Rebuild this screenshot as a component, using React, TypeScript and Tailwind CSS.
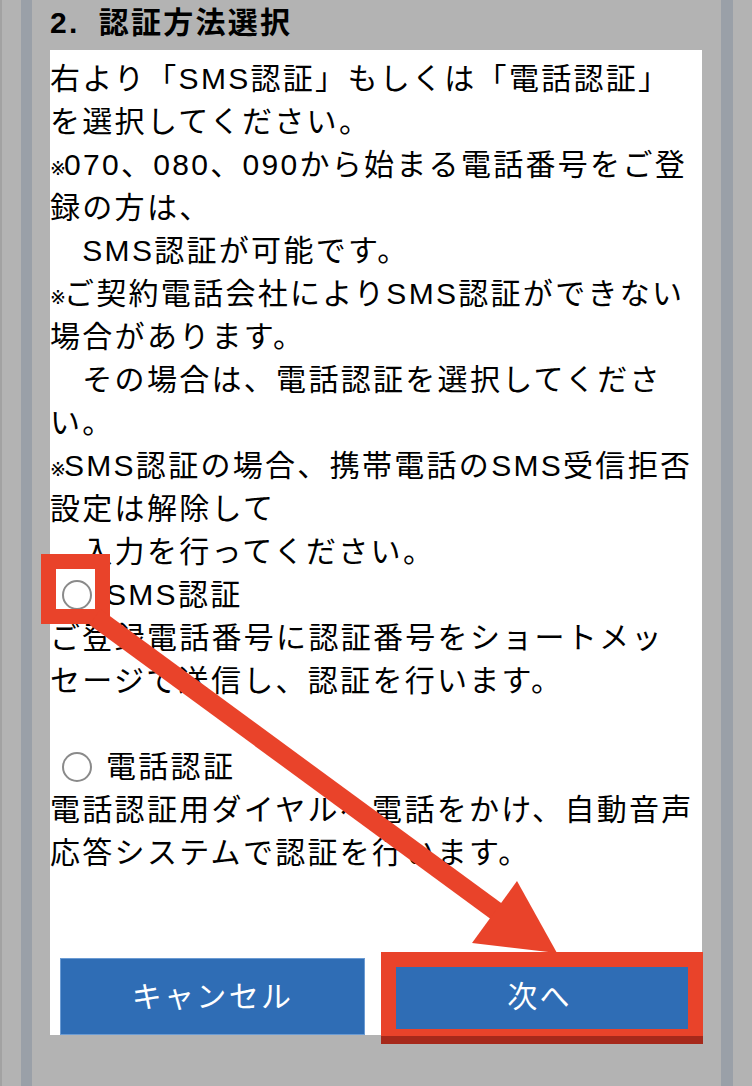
import React from "react";

const RED = "#e9432a";

// narrow reference mark, like the one the phone font draws
const Mark = () => (
  <span className="font-['DejaVu_Sans','Noto_Sans_CJK_JP',sans-serif] text-[19px] leading-none tracking-[-3px] pr-[1px]">
    ※
  </span>
);

const Line = ({ children }: { children?: React.ReactNode }) => (
  <div className="whitespace-nowrap">{children}</div>
);

const Radio = ({ label }: { label: string }) => (
  <div className="flex items-center whitespace-nowrap">
    <span className="ml-[12px] mr-[14px] w-[30px] h-[30px] rounded-full border-2 border-[#8a8a8a] bg-white shrink-0" />
    <span>{label}</span>
  </div>
);

export default function App() {
  return (
    <div className="relative w-[752px] h-[1086px] overflow-hidden bg-[#b3b3b3] flex text-black font-['Liberation_Sans','Noto_Sans_CJK_JP',sans-serif] tracking-[2.3px]">
      {/* left rail */}
      <div className="w-[2px] bg-[#a2a2a2]" />
      <div className="w-[19px]" />
      <div className="w-[11px] bg-[#9aa0a8]" />
      <div className="w-[18px]" />

      <main className="w-[652px] flex flex-col">
        <h2 className="h-[50px] pb-[5px] flex items-end text-[30px] font-bold leading-[45px] whitespace-nowrap">
          <span>2.</span>
          <span className="ml-[19px]">認証方法選択</span>
        </h2>

        <section className="bg-white pt-[7px] text-[30px] leading-[43px] h-[985px] flex flex-col">
          <Line>右より「SMS認証」もしくは「電話認証」</Line>
          <Line>を選択してください。</Line>
          <Line>
            <Mark />
            070、080、090から始まる電話番号をご登
          </Line>
          <Line>録の方は、</Line>
          <Line>　SMS認証が可能です。</Line>
          <Line>
            <Mark />
            ご契約電話会社によりSMS認証ができない
          </Line>
          <Line>場合があります。</Line>
          <Line>　その場合は、電話認証を選択してくださ</Line>
          <Line>い。</Line>
          <Line>
            <Mark />
            SMS認証の場合、携帯電話のSMS受信拒否
          </Line>
          <Line>設定は解除して</Line>
          <Line>　入力を行ってください。</Line>
          <Radio label="SMS認証" />
          <Line>ご登録電話番号に認証番号をショートメッ</Line>
          <Line>セージで送信し、認証を行います。</Line>
          <div className="h-[43px]" />
          <Radio label="電話認証" />
          <Line>電話認証用ダイヤルへ電話をかけ、自動音声</Line>
          <Line>応答システムで認証を行います。</Line>

          <div className="mt-auto flex gap-[22px] px-[10px]">
            <button className="flex-1 h-[77px] bg-[#2f6db5] border border-[#6b9bd3] text-white text-[30px] flex items-center justify-center">
              キャンセル
            </button>
            <button className="flex-1 h-[77px] bg-[#2f6db5] border border-[#6b9bd3] text-white text-[30px] flex items-center justify-center">
              次へ
            </button>
          </div>
        </section>
      </main>

      {/* right rail */}
      <div className="w-[19px]" />
      <div className="w-[12px] bg-[#9aa0a8]" />
      <div className="flex-1" />

      {/* annotations */}
      <div className="absolute left-[41px] top-[554px] w-[69px] h-[70px] border-[15px] border-[#e9432a]" />
      <div className="absolute left-[381px] top-[952px] w-[322px] h-[84px] border-[15px] border-b-[7px] border-[#e9432a]" />
      <div className="absolute left-[381px] top-[1036px] w-[322px] h-[8px] bg-[#a6291b]" />
      <svg
        className="absolute inset-0 pointer-events-none"
        width={752}
        height={1086}
        viewBox="0 0 752 1086"
      >
        <line x1={95} y1={617} x2={500} y2={914} stroke={RED} strokeWidth={19} />
        <polygon points="517,881 472,943 557,953" fill={RED} />
      </svg>
    </div>
  );
}
